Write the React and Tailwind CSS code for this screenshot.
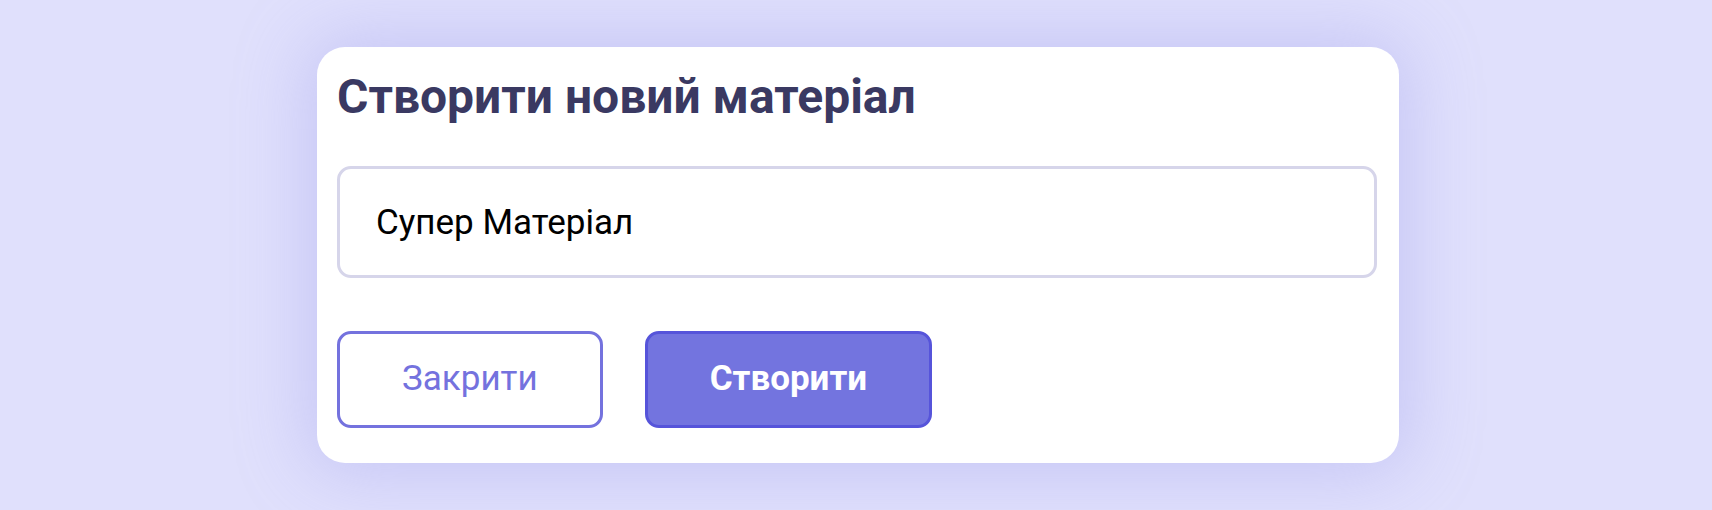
import { useState } from "react";

export default function App() {
  const [name, setName] = useState("Супер Матеріал");

  return (
    <div className="min-h-[510px] w-full bg-[#e0e0fc] flex items-center justify-center font-['Roboto',_'Liberation_Sans',_sans-serif]">
      <div className="w-[1082px] h-[416px] ml-[4px] bg-white rounded-[28px] shadow-[0_0_70px_10px_rgba(150,150,235,0.35)] pl-[20px] pr-[22px] pt-[22px] pb-[35px] flex flex-col">
        <h2 className="text-[48px] leading-[56px] font-bold text-[#3a3962]">Створити новий матеріал</h2>

        <input
          value={name}
          onChange={(e) => setName(e.target.value)}
          className="mt-[41px] h-[112px] w-full rounded-[14px] border-[3px] border-[#d6d5ea] px-[36px] text-[35px] text-black outline-none"
        />

        <div className="mt-auto flex items-center gap-[42px]">
          <button className="h-[97px] px-[62px] rounded-[14px] border-[3px] border-[#7472de] bg-white text-[35px] text-[#7472de]">
            Закрити
          </button>
          <button className="h-[97px] px-[62px] rounded-[14px] border-[3px] border-[#5654da] bg-[#7374df] text-[35px] font-bold text-white">
            Створити
          </button>
        </div>
      </div>
    </div>
  );
}
